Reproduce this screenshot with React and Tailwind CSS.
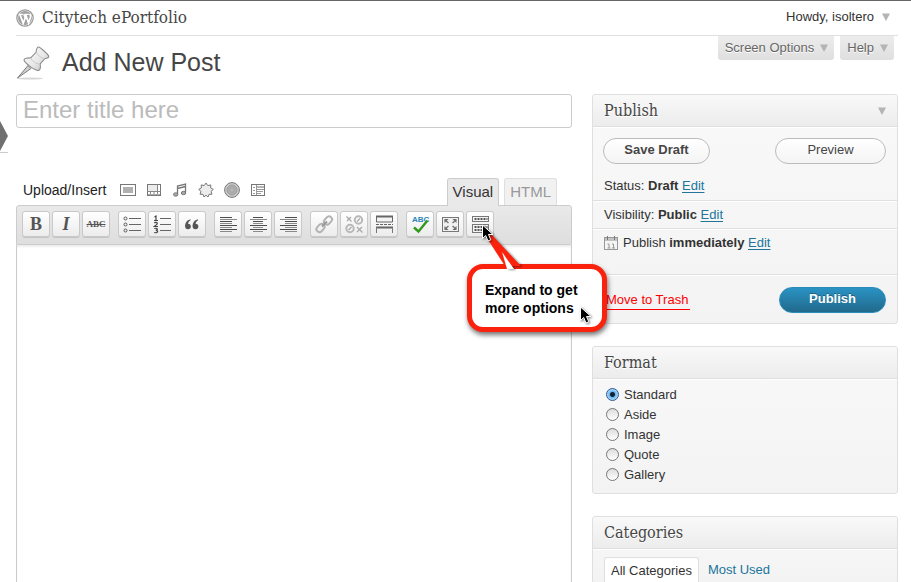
const serif = "font-['DejaVu_Serif_Condensed','DejaVu_Serif',serif]";

function Caret({ className = "" }) {
  return (
    <svg width="8" height="8" viewBox="0 0 8 8" aria-hidden="true" className={className}>
      <path d="M0 0.5h8L4 8z" fill="#b4b4b4" />
    </svg>
  );
}

function WordPressLogo() {
  return (
    <svg width="18" height="18" viewBox="0 0 18 18" aria-hidden="true">
      <circle cx="9" cy="9" r="8.2" fill="#f4f4f4" stroke="#9a9a9a" strokeWidth="1.2" />
      <circle cx="9" cy="9" r="7" fill="#a0a0a0" />
      <path d="M2.8 5.400h4.600M8.400 5.400h4.400" stroke="#fff" strokeWidth="1.200" />
      <path d="M4 5.600l3.200 8.600L9.200 8.800l-1.200-3.200M9.700 5.600l2.800 8.400 2-5.800c.5-1.600-.6-2.500-.8-3.200" fill="none" stroke="#fff" strokeWidth="1.700" />
    </svg>
  );
}

function PinIcon() {
  return (
    <svg width="34" height="34" viewBox="0 0 34 34" aria-hidden="true">
      <defs>
        <linearGradient id="pin" x1="0" y1="0" x2="1" y2="1">
          <stop offset="0" stopColor="#ffffff" />
          <stop offset="0.6" stopColor="#e6e6e6" />
          <stop offset="1" stopColor="#b5b5b5" />
        </linearGradient>
      </defs>
      <ellipse cx="14" cy="32.5" rx="13" ry="1" fill="#d6d6d6" />
      <path d="M12 19.500L1.500 32l13.500-9.500z" fill="#d0d0d0" stroke="#7d7d7d" />
      <path
        d="M22.500 1c1.400 0 10 7.500 10.300 9.500.2 1.600-2.300 1.500-4 2.200l-4.600 5.300c.4 2.800.3 6-1.700 6.400C19.500 25 8.500 17 8 14.200c-.2-2 3.800-2.700 6.600-2.200l5.500-5.700C20.300 4 20.800 1 22.500 1z"
        fill="url(#pin)"
        stroke="#8c8c8c"
        strokeWidth="1.100"
      />
      <path d="M14.600 12c1.500 3 5 6 9.200 6M20.300 6.300c1.500 3 4.500 5.700 8.200 6.400" fill="none" stroke="#c8c8c8" />
    </svg>
  );
}

const mediaIcons = [
  {
    name: "Add an Image",
    art: (
      <>
        <rect x="0.5" y="2.500" width="15" height="11" fill="#fff" stroke="#777" />
        <rect x="3" y="5" width="10" height="6" fill="#b0b0b0" />
      </>
    ),
  },
  {
    name: "Add Video",
    art: (
      <>
        <rect x="1.500" y="2.500" width="13" height="11" fill="#fff" stroke="#777" />
        <path d="M2 3h9v6H2z" fill="#ececec" />
        <path d="M1 9.500h14M11.500 2v8M4.500 10v4M8 10v4M11.500 10v4" stroke="#888" />
        <path d="M2 12.500h12" stroke="#aaa" />
      </>
    ),
  },
  {
    name: "Add Audio",
    art: (
      <>
        <path d="M5.500 12V4l8-2v8.500M5.500 6.500l8-2" fill="none" stroke="#777" strokeWidth="1.300" />
        <ellipse cx="3.700" cy="12.500" rx="2.200" ry="1.700" fill="#aaa" stroke="#777" />
        <ellipse cx="11.500" cy="11" rx="2.200" ry="1.700" fill="#aaa" stroke="#777" />
      </>
    ),
  },
  {
    name: "Add Media",
    art: (
      <path
        d="M8 1l1.800 2.600 3-.7-.2 3 2.700 1.500-2.300 2 1 2.800-3 .2-1 2.600L8 13.200 6 15l-1-2.600-3-.2 1-2.800-2.300-2 2.700-1.500-.2-3 3 .7z"
        fill="#ececec"
        stroke="#777"
      />
    ),
  },
  {
    name: "Add Poll",
    art: (
      <>
        <circle cx="8" cy="8" r="7.400" fill="#cdcdcd" stroke="#777" />
        <circle cx="8" cy="8" r="5" fill="#b0b0b0" stroke="#999" />
        <circle cx="8" cy="8" r="2.300" fill="#bbb" stroke="#a0a0a0" />
      </>
    ),
  },
  {
    name: "Add a Custom Form",
    art: (
      <>
        <rect x="1.500" y="2.500" width="13" height="11" fill="#fff" stroke="#777" />
        <path d="M7 7.500h7M7 9.500h6M7 11.500h4M3 5.500h2M3 8.500h2M3 11.500h2M6.500 3v10" stroke="#999" />
        <path d="M7 4h7v2H7z" fill="#b4b4b4" />
      </>
    ),
  },
];

function lines(rows) {
  return rows.map(([x, w], i) => (
    <rect key={i} x={x} y={3 + i * 2} width={w} height="1" fill={i % 2 ? "#8a8a8a" : "#4d4d4d"} />
  ));
}

const toolGroups = [
  [
    { name: "Bold", text: "B", cls: "font-['Liberation_Serif',serif] text-[18px] font-bold" },
    { name: "Italic", text: "I", cls: "font-['Liberation_Serif',serif] text-[18px] font-bold italic" },
    { name: "Strikethrough", text: "ABC", cls: "font-['Liberation_Serif',serif] text-[9px] font-bold line-through" },
  ],
  [
    {
      name: "Unordered list",
      art: (
        <>
          <path d="M7 4.500h12M7 10.500h12M7 16.500h12" stroke="#666" />
          <g fill="none" stroke="#555">
            <circle cx="3.500" cy="4.500" r="1.500" />
            <circle cx="3.500" cy="10.500" r="1.500" />
            <circle cx="3.500" cy="16.500" r="1.500" />
          </g>
        </>
      ),
    },
    {
      name: "Ordered list",
      art: (
        <>
          <path d="M8 4.500h11M8 10.500h11M8 16.500h11" stroke="#666" />
          <g fill="none" stroke="#444" strokeWidth="1.200">
            <path d="M2.500 3l1.500-1v4.500M2 6.500h4" />
            <path d="M2.300 9c1-1.200 3-.7 3 .5 0 1-1.500 1.500-3 3H6" />
            <path d="M2.300 14.500c3.500-1 4 1.500 1.500 1.800 3.200.2 2.200 3.200-1.600 2.200" />
          </g>
        </>
      ),
    },
    {
      name: "Blockquote",
      art: (
        <g fill="#555">
          <circle cx="6" cy="12.500" r="2.800" />
          <circle cx="13.500" cy="12.500" r="2.800" />
          <path d="M3.200 12.500C3 8.500 5 6 8.500 5.200v1C6.500 7.200 6 9 6 11zM10.700 12.500c-.2-4 1.800-6.500 5.300-7.300v1c-2 1-2.500 2.800-2.500 4.800z" />
        </g>
      ),
    },
  ],
  [
    { name: "Align left", art: lines([[2, 12], [2, 17], [2, 12], [2, 12], [2, 17], [2, 12], [2, 17], [2, 12]]) },
    { name: "Align center", art: lines([[5, 10], [2, 17], [5, 10], [5, 10], [2, 17], [5, 10], [2, 17], [5, 10]]) },
    { name: "Align right", art: lines([[7, 12], [2, 17], [7, 12], [7, 12], [2, 17], [7, 12], [2, 17], [7, 12]]) },
  ],
  [
    {
      name: "Insert link",
      art: (
        <g fill="none" stroke="#b3b3b3" strokeWidth="2">
          <rect x="-4.500" y="-3" width="9" height="6" rx="3" transform="translate(14 6.500) rotate(-48)" />
          <rect x="-4.500" y="-3" width="9" height="6" rx="3" transform="translate(6.500 14) rotate(-48)" />
          <path d="M8 12.500l5-5" stroke="#999" />
        </g>
      ),
    },
    {
      name: "Unlink",
      art: (
        <>
          <g fill="none" stroke="#b8b8b8" strokeWidth="2">
            <circle cx="14.500" cy="6" r="3.700" />
            <circle cx="6" cy="14.500" r="3.700" />
          </g>
          <path d="M2.500 2.500l5 5M7 3L3 7M13 13l5.500 5.500M18 13l-5 5M13 7.500l3-3M4.500 16l3-3" stroke="#a8a8a8" strokeWidth="1.200" />
        </>
      ),
    },
    {
      name: "Insert More tag",
      art: (
        <>
          <path d="M2.500 8V2.500h16V8z" fill="#f4f4f4" stroke="#666" />
          <path d="M2 2.500h17M2 13.500h17" stroke="#666" strokeWidth="2" />
          <path d="M2 10.500h17" stroke="#666" strokeDasharray="3 1" />
          <path d="M2.500 19v-6M18.500 19v-6" stroke="#777" />
        </>
      ),
    },
  ],
  [
    {
      name: "Proofread writing",
      art: (
        <>
          <text x="2" y="8" fontFamily="Liberation Sans, sans-serif" fontSize="8" fontWeight="bold" fill="#2b85b8">ABC</text>
          <path d="M4 13.500l4.500 4L17.500 6.500" fill="none" stroke="#2f9a1c" strokeWidth="2.400" />
        </>
      ),
    },
    {
      name: "Distraction free writing",
      art: (
        <>
          <rect x="2.500" y="3.500" width="16" height="14" fill="#f1f1f1" stroke="#777" />
          <path d="M4.500 5h4l-4 4zM16.500 5h-4l4 4zM4.500 16h4l-4-4zM16.500 16h-4l4-4z" fill="#666" />
          <path d="M5 6l3.500 3M16 6l-3.500 3M5 15l3.500-3M16 15l-3.500-3" stroke="#777" strokeWidth="1.500" />
        </>
      ),
    },
    {
      name: "Show/Hide Kitchen Sink",
      art: (
        <>
          <rect x="2.500" y="2.500" width="16" height="5" fill="#f4f4f4" stroke="#777" />
          <rect x="2.500" y="10.500" width="16" height="8" fill="#f4f4f4" stroke="#777" />
          <path d="M4.500 5h13M4.500 13h13M4.500 16h13" stroke="#555" strokeWidth="2" strokeDasharray="2 1" />
        </>
      ),
    },
  ],
];

function ToolButton({ tool }) {
  return (
    <button
      type="button"
      aria-label={tool.name}
      className="flex h-[26px] w-7 items-center justify-center rounded-[3px] border border-[#c9c9c9] bg-linear-to-b from-white to-[#ececec] leading-none text-[#555] shadow-[0_1px_0_#c4c4c4]"
    >
      {tool.text ? (
        <span className={tool.cls}>{tool.text}</span>
      ) : (
        <svg width="21" height="21" viewBox="0 0 21 21" className="shrink-0" aria-hidden="true">
          {tool.art}
        </svg>
      )}
    </button>
  );
}

function Pointer({ className }) {
  return (
    <svg width="14" height="20" viewBox="0 0 14 20" className={className} aria-hidden="true">
      <path d="M1.500 1v13.500l3.200-3 2.300 5.500 2.800-1.200-2.300-5.300H12z" fill="#000" stroke="#fff" strokeWidth="1" />
    </svg>
  );
}

function Callout() {
  return (
    <div className="absolute top-[59px] left-[451px] z-10 w-[140px]">
      <div className="rounded-[16px] border-[5px] border-[#fb220d] bg-white pt-[12px] pr-3 pb-[10px] pl-[13px] text-[14px] leading-[18px] font-bold whitespace-nowrap text-black shadow-[1px_3px_5px_rgba(0,0,0,0.55)]">
        Expand to get
        <br />
        more options
      </div>
      <svg
        width="44"
        height="40"
        viewBox="0 0 44 40"
        className="absolute -top-[32px] left-[14px] drop-shadow-[2px_1px_1px_rgba(0,0,0,0.4)]"
        aria-hidden="true"
      >
        <path d="M4 3h7l28 30v1H24z" fill="#fb220d" />
        <path d="M21 20l12 17h-7z" fill="#fff" />
      </svg>
      <Pointer className="absolute -top-[40px] left-[14px] drop-shadow-[1px_1px_1px_rgba(0,0,0,0.5)]" />
      <Pointer className="absolute top-[42px] left-[112px] drop-shadow-[1px_1px_1px_rgba(0,0,0,0.5)]" />
    </div>
  );
}

function Panel({ title, caret, children }) {
  return (
    <section className="rounded-[3px] border border-[#dfdfdf] bg-linear-to-b from-[#f9f9f9] to-[#f3f3f3]">
      <header className="flex h-8 items-center justify-between rounded-t-[3px] border-b border-[#dfdfdf] bg-linear-to-b from-[#f9f9f9] to-[#ececec] px-[11px] shadow-[0_1px_0_#fff]">
        <h2 className={`${serif} text-[16px] text-[#464646] [text-shadow:0_1px_0_#fff]`}>{title}</h2>
        {caret && <Caret />}
      </header>
      {children}
    </section>
  );
}

function EditLink() {
  return (
    <a href="#edit" className="text-[#21759b] underline underline-offset-2">
      Edit
    </a>
  );
}

function PublishPanel() {
  const pill = "h-[26px] rounded-full border border-[#bbb] bg-linear-to-b from-white to-[#f4f4f4] pb-0.5 text-[#464646]";
  return (
    <Panel title="Publish" caret>
      <div className="flex items-start justify-between pt-[11px] pr-[11px] pl-[10px]">
        <button type="button" className={`${pill} w-[107px] font-bold`}>Save Draft</button>
        <button type="button" className={`${pill} w-[111px]`}>Preview</button>
      </div>
      <div className="px-[11px] pt-[12px] pb-1 leading-[20px]">
        Status: <b>Draft</b> <EditLink />
      </div>
      <div className="border-t border-[#dfdfdf] px-[11px] pt-1 pb-[3px] leading-[20px] shadow-[inset_0_1px_0_#fff]">
        Visibility: <b>Public</b> <EditLink />
      </div>
      <div className="flex items-start gap-[5px] border-t border-[#dfdfdf] px-[11px] pt-1 pb-[21px] leading-[20px] shadow-[inset_0_1px_0_#fff]">
        <svg width="14" height="16" viewBox="0 0 14 16" className="mt-[2px]" aria-hidden="true">
          <rect x="0.5" y="2.500" width="13" height="12" fill="#f5f5f5" stroke="#999" />
          <path d="M1 3h12v3H1z" fill="#c4c4c4" />
          <path d="M3.500 1v4M10.500 1v4" stroke="#777" />
          <path d="M3.500 9h1.500v4M3.500 13h3M8 9h1.500v4M8 13h3" fill="none" stroke="#999" />
        </svg>
        <span>
          Publish <b>immediately</b> <EditLink />
        </span>
      </div>
      <div className="flex items-center justify-between border-t border-[#dfdfdf] px-[11px] pt-[12px] pb-[10px] shadow-[inset_0_1px_0_#fff]">
        <a href="#trash" className="border-b border-b-[#ff0000] px-0.5 leading-[18px] text-[#ff0000]">
          Move to Trash
        </a>
        <button
          type="button"
          className="h-[26px] w-[107px] rounded-full border border-[#298cba] bg-linear-to-b from-[#2a93c4] to-[#21698c] pb-[3px] font-bold text-white [text-shadow:0_-1px_0_rgba(0,0,0,0.3)]"
        >
          Publish
        </button>
      </div>
    </Panel>
  );
}

function FormatPanel() {
  return (
    <Panel title="Format">
      <fieldset aria-label="Format" className="flex flex-col gap-px px-[13px] pt-[6px] pb-[9px]">
        {["Standard", "Aside", "Image", "Quote", "Gallery"].map((name) => (
          <label key={name} className="flex h-[19px] items-center gap-[5px]">
            <input
              type="radio"
              name="format"
              defaultChecked={name === "Standard"}
              className="size-[13px] appearance-none rounded-full border border-[#777] bg-linear-to-b from-[#ddd] to-white checked:border-[#31588f] checked:bg-[radial-gradient(circle,#123_0_2px,#6cb4ee_3px,#b5e2ff_6px)]"
            />
            {name}
          </label>
        ))}
      </fieldset>
    </Panel>
  );
}

function CategoriesPanel() {
  return (
    <Panel title="Categories">
      <div className="flex items-start px-[11px] pt-2 leading-[26px]">
        <button type="button" className="h-[26px] rounded-t-[3px] border border-b-0 border-[#dfdfdf] bg-white px-1.5 text-[#333]">
          All Categories
        </button>
        <a href="#most-used" className="px-[9px] text-[#21759b]">Most Used</a>
      </div>
    </Panel>
  );
}

function Editor() {
  return (
    <div className="mt-[50px]">
      <div className="flex items-end pr-[15px] pl-[7px]">
        <span className="pb-[6px] text-[14px] leading-[20px] text-[#222]">Upload/Insert</span>
        <div className="flex gap-2.5 pb-2 pl-[14px]">
          {mediaIcons.map((icon) => (
            <button key={icon.name} type="button" aria-label={icon.name}>
              <svg width="16" height="16" viewBox="0 0 16 16" aria-hidden="true">{icon.art}</svg>
            </button>
          ))}
        </div>
        <div className="ml-auto flex gap-[5px] text-[15px]">
          <button type="button" className="z-1 h-7 rounded-t-[3px] border border-b-0 border-[#ccc] bg-[#e9e9e9] px-[5px] text-[#333]">
            Visual
          </button>
          <button type="button" className="h-7 rounded-t-[3px] border border-b-0 border-[#dfdfdf] bg-[#f1f1f1] px-[5px] text-[#999]">
            HTML
          </button>
        </div>
      </div>
      <div className="relative -mt-px">
        <div className="flex h-10 items-center gap-2 rounded-t-[3px] border border-[#ccc] bg-linear-to-b from-[#e9e9e9] to-[#dedede] px-[5px] pb-0.5">
          {toolGroups.map((group, i) => (
            <div key={i} className="flex gap-0.5">
              {group.map((tool) => (
                <ToolButton key={tool.name} tool={tool} />
              ))}
            </div>
          ))}
        </div>
        <textarea
          aria-label="Post content"
          className="block h-[400px] w-full resize-none border-x border-[#ccc] bg-white shadow-[inset_0_2px_2px_#eee] outline-none"
        />
        <Callout />
      </div>
    </div>
  );
}

export default function App() {
  const screenTab =
    "flex h-6 items-center gap-1.5 rounded-b-[3px] bg-linear-to-b from-[#ececec] to-[#dfdfdf] pr-1.5 pl-[7px] text-[13px] text-[#666] [text-shadow:0_1px_0_#fff]";
  return (
    <div className="relative h-screen overflow-hidden border-t border-[#666] bg-white font-['Liberation_Sans',Arial,sans-serif] text-[13px] text-[#333]">
      <svg width="8" height="34" viewBox="0 0 8 34" className="absolute top-[119px] left-0" aria-hidden="true">
        <path d="M0 1l8 15-8 15z" fill="#707070" />
        <path d="M0 32.500h8" stroke="#ccc" />
      </svg>
      <div className="pr-[13px] pl-4">
        <header className="flex h-[35px] items-center justify-between border-b border-[#dfdfdf]">
          <div className="flex items-center gap-2">
            <WordPressLogo />
            <h1 className={`${serif} text-[17px] text-[#464646]`}>Citytech ePortfolio</h1>
          </div>
          <button type="button" className="flex items-center gap-2 pr-2 pb-0.5 text-[13px] text-[#333]">
            Howdy, isoltero
            <Caret />
          </button>
        </header>
        <div className="flex h-[58px] items-start justify-between">
          <div className="flex items-center gap-3 pt-[10px]">
            <PinIcon />
            <h2 className="pb-0.5 text-[25px] leading-[32px] text-[#464646]">Add New Post</h2>
          </div>
          <div className="flex gap-1.5 pr-1">
            <button type="button" className={screenTab}>
              Screen Options
              <Caret />
            </button>
            <button type="button" className={screenTab}>
              Help
              <Caret />
            </button>
          </div>
        </div>
        <div className="flex items-start gap-5">
          <main className="min-w-0 flex-1">
            <input
              type="text"
              aria-label="Title"
              placeholder="Enter title here"
              className="block h-[34px] w-full rounded-[3px] border border-[#ccc] bg-white px-1.5 pb-[3px] text-[24px] outline-none placeholder:text-[#bbb]"
            />
            <Editor />
          </main>
          <aside className="flex w-[306px] shrink-0 flex-col gap-[22px]">
            <PublishPanel />
            <FormatPanel />
            <CategoriesPanel />
          </aside>
        </div>
      </div>
    </div>
  );
}
